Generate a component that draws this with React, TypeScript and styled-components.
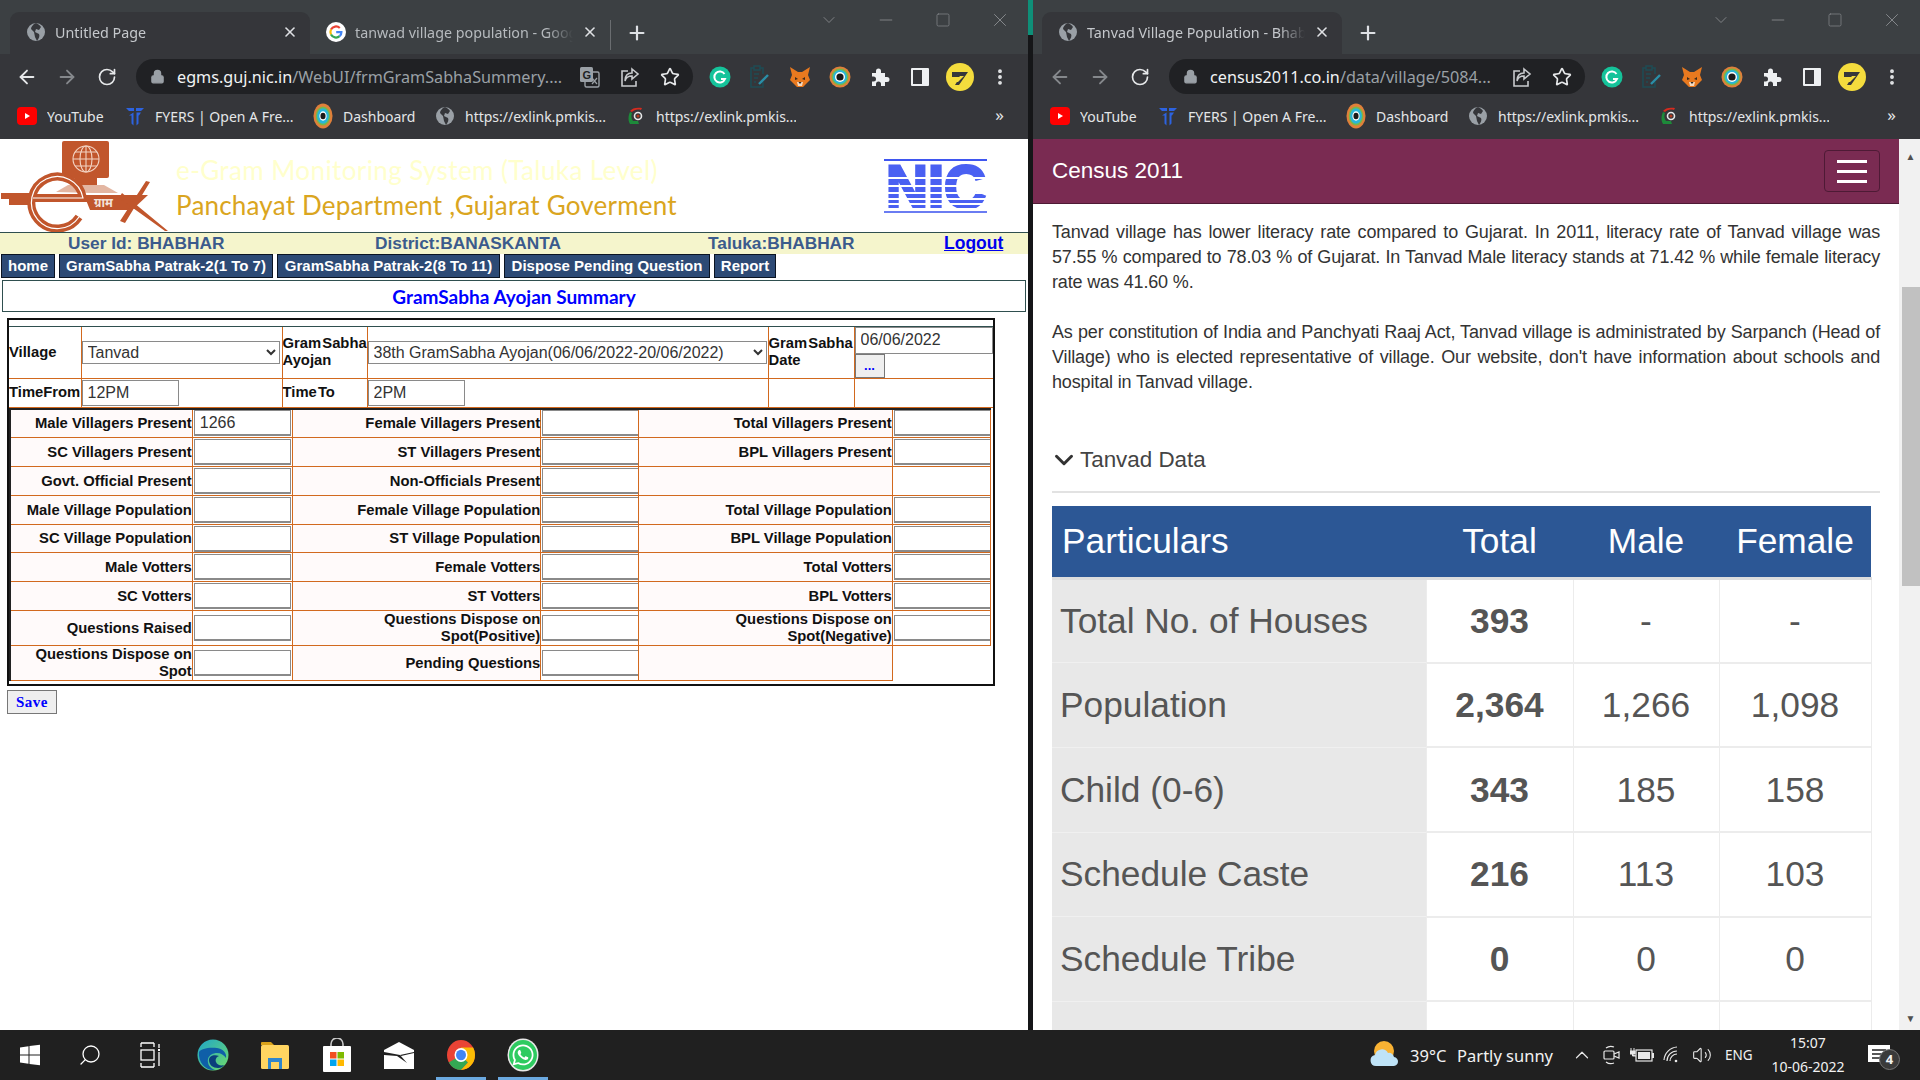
import React from "react";
import styled, { createGlobalStyle } from "styled-components";
import { ArrowLeft, ArrowRight, RotateCw, Lock, Star, Plus, X, Minus, Square, ChevronDown, ChevronUp, MoreVertical, Search, Volume2 } from "lucide-react";
import { FaWhatsapp } from "react-icons/fa";

const GlobalStyle = createGlobalStyle`
  html, body { margin: 0; padding: 0; background: #1b1c1e; }
  * { box-sizing: border-box; }
`;

const CHROME_FONT = `"Noto Sans", "Open Sans", sans-serif`;
const ARIAL = `"Liberation Sans", Arial, sans-serif`;
const COMIC = `"Comic Sans MS", "Lato", sans-serif`;

/* ---------- desktop ---------- */
const Screen = styled.div`
  width: 1920px;
  height: 1080px;
  display: grid;
  grid-template-rows: 1030px 50px;
  overflow: hidden;
`;
const Desktop = styled.div`
  display: flex;
  min-height: 0;
`;
const Divider = styled.div`
  width: 5px;
  background: linear-gradient(#0f8f78 0 35px, #151618 35px);
`;

/* ---------- browser chrome ---------- */
const Win = styled.div<{ $w: number }>`
  width: ${(p) => p.$w}px;
  display: flex;
  flex-direction: column;
  min-height: 0;
  background: #fff;
`;
const TabStrip = styled.div<{ $pad: number }>`
  height: 54px;
  flex: none;
  display: flex;
  background: #3c4043;
  padding-left: ${(p) => p.$pad}px;
  font: 14.3px ${CHROME_FONT};
`;
const Tab = styled.div<{ $active?: boolean }>`
  width: 300px;
  height: 42px;
  margin-top: 12px;
  display: flex;
  align-items: center;
  padding: 0 12px 2px 16px;
  gap: 9px;
  border-radius: 9px 9px 0 0;
  color: ${(p) => (p.$active ? "#c5c8cc" : "#b6babe")};
  background: ${(p) => (p.$active ? "#35363a" : "transparent")};
`;
const TabTitle = styled.span`
  flex: 1;
  white-space: nowrap;
  overflow: hidden;
  mask-image: linear-gradient(to right, #000 88%, transparent);
`;
const TabSep = styled.div`
  width: 1px;
  height: 30px;
  margin-top: 20px;
  background: #6a6d70;
`;
const NewTab = styled.div`
  width: 52px;
  height: 42px;
  margin-top: 12px;
  display: flex;
  align-items: center;
  justify-content: center;
  color: #dee1e5;
`;
const WinControls = styled.div`
  margin-left: auto;
  display: flex;
  height: 40px;
  color: #8b8e92;
`;
const WinControl = styled.div`
  width: 57px;
  display: flex;
  align-items: center;
  justify-content: center;
`;
const Toolbar = styled.div`
  height: 45px;
  flex: none;
  display: flex;
  align-items: center;
  padding-left: 7px;
  background: #35363a;
`;
const ToolBtn = styled.div<{ $dim?: boolean }>`
  width: 40px;
  height: 35px;
  flex: none;
  display: flex;
  align-items: center;
  justify-content: center;
  color: ${(p) => (p.$dim ? "#85888c" : "#e6e8ea")};
`;
const Pill = styled.div<{ $w: number }>`
  width: ${(p) => p.$w}px;
  height: 35px;
  margin-left: 9px;
  margin-right: 7px;
  flex: none;
  display: flex;
  align-items: center;
  border-radius: 18px;
  background: #202124;
  padding-left: 14px;
  padding-right: 3px;
  font: 16.2px ${CHROME_FONT};
  color: #9aa0a6;
`;
const UrlText = styled.div`
  flex: 1;
  margin-left: 12px;
  white-space: nowrap;
  overflow: hidden;
  b {
    font-weight: 400;
    color: #f1f3f4;
  }
`;
const Bookmarks = styled.div`
  height: 40px;
  flex: none;
  display: flex;
  align-items: flex-start;
  gap: 20px;
  padding: 6px 24px 0 17px;
  background: #35363a;
  border-bottom: 4px solid #35363a;
  font: 14px ${CHROME_FONT};
  color: #e4e6e8;
`;
const Bookmark = styled.div`
  display: flex;
  align-items: center;
  gap: 10px;
  height: 22px;
`;
const BookmarkLabel = styled.span<{ $w: number }>`
  width: ${(p) => p.$w}px;
  white-space: nowrap;
  overflow: hidden;
`;
const More = styled.span`
  margin-left: auto;
  font-size: 17px;
  line-height: 20px;
`;

/* ---------- small drawn icons ---------- */
const Globe = () => (
  <svg width="20" height="20" viewBox="0 0 20 20">
    <circle cx="10" cy="10" r="9" fill="#9aa0a6" />
    <path d="M10 1c-3 1-5 4-5 6l3 3 1 5 2 4c2-3 3-5 2-7l-4-2 1-3 3 1 2-3c-1-2-3-3-5-4z" fill="#35363a" />
  </svg>
);
const GoogleG = () => (
  <svg width="20" height="20" viewBox="0 0 20 20">
    <circle cx="10" cy="10" r="10" fill="#fff" />
    <path d="M5 7.5A5.6 5.6 0 0 1 13.8 6" fill="none" stroke="#ea4335" strokeWidth="2.2" />
    <path d="M5 7.5a5.6 5.6 0 0 0 0 5" fill="none" stroke="#fbbc05" strokeWidth="2.2" />
    <path d="M5 12.5a5.6 5.6 0 0 0 8.6 1.7" fill="none" stroke="#34a853" strokeWidth="2.2" />
    <path d="M13.6 14.2c1.2-1 1.8-2.4 1.8-4H10.2" fill="none" stroke="#4285f4" strokeWidth="2.2" />
  </svg>
);
const Translate = () => (
  <svg width="22" height="22" viewBox="0 0 22 22">
    <rect x="6" y="6" width="14" height="15" rx="1.5" fill="none" stroke="#9aa0a6" strokeWidth="1.4" />
    <rect x="1" y="1" width="13" height="15" rx="1.5" fill="#9aa0a6" />
    <text x="3.5" y="13" fontSize="11" fontWeight="700" fontFamily={ARIAL} fill="#202124">G</text>
    <path d="M13 12l5 6M18 12l-5 6" stroke="#9aa0a6" strokeWidth="1.2" />
  </svg>
);
const ShareIcon = () => (
  <svg width="22" height="22" viewBox="0 0 22 22" fill="none" stroke="#c8cacd" strokeWidth="1.6">
    <path d="M9 5H3v15h14v-5" />
    <path d="M13 3l6 5-6 5v-3c-4 0-6 1-7 5 0-5 2-8 7-8z" />
  </svg>
);
const Grammarly = () => (
  <svg width="22" height="22" viewBox="0 0 22 22">
    <circle cx="11" cy="11" r="10.5" fill="#15c39a" />
    <path d="M15.5 8a5.5 5.5 0 1 0 .5 5h-4" fill="none" stroke="#fff" strokeWidth="2" />
  </svg>
);
const Clipboard = () => (
  <svg width="22" height="24" viewBox="0 0 22 24" fill="none" stroke="#1f4c54" strokeWidth="1.6">
    <path d="M5 3H2v19h12v-5M11 3h3v6M5 1h6v4H5z" />
    <path d="M5 9h5M5 13h4M5 17h2" />
    <path d="M10 19l9-9" stroke="#2a8fa8" strokeWidth="2.4" />
  </svg>
);
const Fox = () => (
  <svg width="22" height="22" viewBox="0 0 22 22">
    <path d="M1 1l8 5h4l8-5-2 8 2 5-4 4-3 3H8l-3-3-4-4 2-5z" fill="#e8791f" />
    <path d="M6 11l3 2-3 1zM16 11l-3 2 3 1z" fill="#3b2a1d" />
    <path d="M8 16h6l-1 4H9z" fill="#f5d9bf" />
    <path d="M9.5 16h3l-1.5 2z" fill="#222" />
  </svg>
);
const EyeIcon = () => (
  <svg width="22" height="22" viewBox="0 0 22 22">
    <circle cx="11" cy="11" r="10.5" fill="#e0803a" />
    <circle cx="11" cy="11" r="8.5" fill="#7ab648" />
    <circle cx="11" cy="11" r="7" fill="#29b6d8" />
    <circle cx="11" cy="11" r="5" fill="#fff" />
    <circle cx="11" cy="11" r="3.6" fill="#1a1a1a" />
  </svg>
);
const PuzzleIcon = () => (
  <svg width="20" height="20" viewBox="0 0 20 20">
    <path d="M2 6h4V4a2.5 2.5 0 0 1 5 0v2h4v4h2a2.5 2.5 0 0 1 0 5h-2v4h-4v-2a2.5 2.5 0 0 0-5 0v2H2v-4.5h1.5a2.5 2.5 0 0 0 0-5H2z" fill="#eef0f2" />
  </svg>
);
const SidePanel = () => (
  <svg width="18" height="18" viewBox="0 0 18 18">
    <rect width="18" height="18" rx="1" fill="#eef0f2" />
    <rect x="2" y="2" width="9" height="14" fill="#35363a" />
  </svg>
);
const YellowBadge = () => (
  <svg width="28" height="28" viewBox="0 0 28 28">
    <circle cx="14" cy="14" r="14" fill="#f4dc3d" />
    <path d="M6 9h16l-9 13H9l5-8H6z" fill="#35363a" />
    <path d="M9 19l5-6h4l-6 6z" fill="#f4dc3d" />
  </svg>
);
const YouTubeMark = () => (
  <svg width="20" height="20" viewBox="0 0 20 20">
    <rect x="0" y="1" width="20" height="18" rx="4" fill="#f00" />
    <path d="M8 7l5 3-5 3z" fill="#fff" />
  </svg>
);
const Fyers = () => (
  <svg width="20" height="20" viewBox="0 0 20 20" fill="#2d63e0">
    <path d="M1 2h8v3H4zM11 2h8l-3 3h-5zM8.5 6.5v13l-2-2V9.5H4zM11.5 6.5H16l-2 3h-.5v8l-2 2z" />
  </svg>
);
const PmKisan = () => (
  <svg width="20" height="20" viewBox="0 0 20 20" fill="none">
    <path d="M4 5c2-3 7-4 12-3l-1 2c-4-1-7 0-9 2z" fill="#d62b1f" />
    <path d="M4 6c-2 4-2 9 0 12l9 0-1-3H7c-2-3-2-5-1-8z" fill="#1d8a3a" />
    <circle cx="12" cy="10" r="3.5" stroke="#e8e8e8" strokeWidth="1.6" />
    <circle cx="12" cy="10" r="1.5" fill="#b23a1e" />
  </svg>
);
const Dashboard = () => (
  <svg width="20" height="26" viewBox="0 0 22 22" preserveAspectRatio="none">
    <circle cx="11" cy="11" r="10.5" fill="#e0803a" />
    <circle cx="11" cy="11" r="8" fill="#7ab648" />
    <circle cx="11" cy="11" r="6.5" fill="#29b6d8" />
    <circle cx="11" cy="11" r="4" fill="#fff" />
    <circle cx="11" cy="11" r="2.8" fill="#1a1a1a" />
  </svg>
);

const bookmarks = [
  { icon: <YouTubeMark />, label: "YouTube", w: 58 },
  { icon: <Fyers />, label: "FYERS | Open A Fre...", w: 138 },
  { icon: <Dashboard />, label: "Dashboard", w: 72 },
  { icon: <Globe />, label: "https://exlink.pmkis...", w: 141 },
  { icon: <PmKisan />, label: "https://exlink.pmkis...", w: 140 },
];

interface BrowserProps {
  w: number;
  pad: number;
  tabs: { title: string; icon: React.ReactNode; active?: boolean }[];
  host: string;
  path: string;
  pill: number;
  translate?: boolean;
  backDim?: boolean;
  children: React.ReactNode;
}

const Browser = ({ w, pad, tabs, host, path, pill, translate, backDim, children }: BrowserProps) => (
  <Win $w={w}>
    <TabStrip $pad={pad}>
      {tabs.map((t) => (
        <Tab key={t.title} $active={t.active}>
          {t.icon}
          <TabTitle>{t.title}</TabTitle>
          <X size={16} color="#dfe1e4" strokeWidth={2.4} />
        </Tab>
      ))}
      {tabs.length > 1 && <TabSep />}
      <NewTab>
        <Plus size={22} strokeWidth={2.4} />
      </NewTab>
      <WinControls>
        <WinControl><ChevronDown size={20} strokeWidth={1} /></WinControl>
        <WinControl><Minus size={20} strokeWidth={1} /></WinControl>
        <WinControl><Square size={16} strokeWidth={1} /></WinControl>
        <WinControl><X size={22} strokeWidth={1} /></WinControl>
      </WinControls>
    </TabStrip>
    <Toolbar>
      <ToolBtn $dim={backDim}><ArrowLeft size={22} /></ToolBtn>
      <ToolBtn $dim><ArrowRight size={22} /></ToolBtn>
      <ToolBtn><RotateCw size={20} /></ToolBtn>
      <Pill $w={pill}>
        <Lock size={15} fill="#9aa0a6" color="#9aa0a6" />
        <UrlText><b>{host}</b>{path}</UrlText>
        {translate && <ToolBtn><Translate /></ToolBtn>}
        <ToolBtn><ShareIcon /></ToolBtn>
        <ToolBtn><Star size={20} /></ToolBtn>
      </Pill>
      <ToolBtn><Grammarly /></ToolBtn>
      <ToolBtn><Clipboard /></ToolBtn>
      <ToolBtn><Fox /></ToolBtn>
      <ToolBtn><EyeIcon /></ToolBtn>
      <ToolBtn><PuzzleIcon /></ToolBtn>
      <ToolBtn><SidePanel /></ToolBtn>
      <ToolBtn><YellowBadge /></ToolBtn>
      <ToolBtn><MoreVertical size={20} strokeWidth={2.6} /></ToolBtn>
    </Toolbar>
    <Bookmarks>
      {bookmarks.map((b, i) => (
        <Bookmark key={i}>
          {b.icon}
          <BookmarkLabel $w={b.w}>{b.label}</BookmarkLabel>
        </Bookmark>
      ))}
      <More>»</More>
    </Bookmarks>
    {children}
  </Win>
);

/* ---------- left page: e-gram form ---------- */
const LeftPage = styled.div`
  flex: 1;
  min-height: 0;
  overflow: hidden;
  background: #fff;
`;
const SiteHeader = styled.header`
  height: 93px;
  display: flex;
`;
const SiteTitles = styled.div`
  margin-left: 6px;
  padding-top: 14px;
  font: 26px/35px ${COMIC};
  white-space: nowrap;
`;
const SystemName = styled.div`
  color: #ffffcc;
  letter-spacing: 0.4px;
`;
const DeptName = styled.div`
  color: #daa520;
  letter-spacing: 0.2px;
`;
const NicWrap = styled.div`
  margin-left: auto;
  margin-right: 41px;
  padding-top: 20px;
`;
const InfoBar = styled.div`
  height: 22px;
  display: flex;
  align-items: center;
  padding-left: 68px;
  background: #f5f5cc;
  border-top: 1px solid #2f4f4f;
  font: bold 17.3px ${ARIAL};
  color: #3b5b8c;
  white-space: nowrap;
`;
const InfoItem = styled.span<{ $w: number }>`
  width: ${(p) => p.$w}px;
`;
const Logout = styled.a`
  color: #0000ee;
  text-decoration: underline;
  font-size: 17.5px;
`;
const NavRow = styled.nav`
  height: 24px;
  display: flex;
  gap: 4px;
  padding-left: 1px;
`;
const NavItem = styled.div<{ $w: number }>`
  width: ${(p) => p.$w}px;
  display: flex;
  align-items: center;
  justify-content: center;
  padding-bottom: 2px;
  background: #2d4a75;
  border: 1px solid #0b1422;
  color: #fff;
  font: bold 15px ${ARIAL};
  white-space: nowrap;
`;
const TitleBox = styled.div`
  height: 32px;
  margin: 2px 2px 0;
  border: 1px solid #2f4f4f;
  display: flex;
  align-items: center;
  justify-content: center;
  font: bold 19px ${COMIC};
  color: #0000ff;
`;
const FormFrame = styled.table`
  width: 988px;
  margin: 6px 0 0 7px;
  table-layout: fixed;
  border-collapse: collapse;
  border: 2px solid #111;
  font: bold 14.8px/17px ${ARIAL};
  color: #111;
`;
const ThinRow = styled.tr`
  height: 7px;
  td {
    padding: 0;
    border-bottom: 1px solid #2f4f4f;
  }
`;
const HeadCell = styled.td`
  padding: 0;
  border: 1px solid #d2691e;
  vertical-align: middle;
`;
const HeadRow = styled.tr<{ $h: number }>`
  height: ${(p) => p.$h}px;
`;
const InnerWrap = styled.td`
  padding: 0;
`;
const InnerTable = styled.table`
  width: 982px;
  table-layout: fixed;
  border-collapse: collapse;
  border-top: 2px solid #222;
  border-left: 2px solid #222;
  margin-bottom: 3px;
`;
const InnerRow = styled.tr<{ $h: number }>`
  height: ${(p) => p.$h}px;
`;
const Label = styled.td`
  padding: 0;
  text-align: right;
  background: #fffafa;
  border: 1px solid #d2691e;
`;
const FieldCell = styled.td<{ $open?: boolean }>`
  padding: 0 1px;
  border: ${(p) => (p.$open ? "none" : "1px solid #d2691e")};
`;
const Field = styled.input`
  display: block;
  width: 97px;
  height: 26px;
  border: 1px solid #8a8a8a;
  border-bottom-width: 2px;
  padding: 0 5px;
  font: 16px ${ARIAL};
  color: #333;
  background: #fff;
`;
const TimeField = styled(Field)`
  border-bottom-width: 1px;
`;
const Picker = styled.select<{ $w: number }>`
  display: block;
  width: ${(p) => p.$w}px;
  height: 23px;
  border: 1px solid #8a8a8a;
  border-radius: 0;
  padding: 0 0 0 1px;
  font: 16px ${ARIAL};
  color: #333;
  background: #fff;
`;
const DateField = styled(TimeField)`
  width: 138px;
  height: 27px;
`;
const DotsBtn = styled.button`
  display: block;
  width: 30px;
  height: 24px;
  padding: 0;
  background: #efefef;
  border: 1px solid #777;
  font: bold 13px ${ARIAL};
  color: #0000ff;
`;
const SaveBtn = styled.button`
  display: block;
  width: 50px;
  height: 24px;
  margin: 4px 0 0 7px;
  padding: 0;
  background: #efefef;
  border: 1px solid #777;
  font: bold 15px "Liberation Serif", serif;
  letter-spacing: 0.5px;
  color: #0000ff;
`;
const JoinWords = styled.span`
  word-spacing: -3px;
  white-space: nowrap;
`;

const rows: { h: number; cells: string[]; value?: string }[] = [
  { h: 29, value: "1266", cells: ["Male Villagers Present", "Female Villagers Present", "Total Villagers Present"] },
  { h: 29, cells: ["SC Villagers Present", "ST Villagers Present", "BPL Villagers Present"] },
  { h: 29, cells: ["Govt. Official Present", "Non-Officials Present", ""] },
  { h: 29, cells: ["Male Village Population", "Female Village Population", "Total Village Population"] },
  { h: 28, cells: ["SC Village Population", "ST Village Population", "BPL Village Population"] },
  { h: 29, cells: ["Male Votters", "Female Votters", "Total Votters"] },
  { h: 29, cells: ["SC Votters", "ST Votters", "BPL Votters"] },
  { h: 35, cells: ["Questions Raised", "Questions Dispose on Spot(Positive)", "Questions Dispose on Spot(Negative)"] },
  { h: 35, cells: ["Questions Dispose on Spot", "Pending Questions", ""] },
];

const GramForm = () => (
  <LeftPage>
    <SiteHeader>
      <svg width="170" height="93" viewBox="0 0 170 93">
        <rect x="62" y="2" width="47" height="37" rx="2" fill="#c1562c" />
        <g fill="none" stroke="#f3d4c4" strokeWidth="1.1">
          <circle cx="86" cy="20" r="13" />
          <ellipse cx="86" cy="20" rx="6" ry="13" />
          <path d="M86 7v26M73 20h26M75 13h22M75 27h22" />
        </g>
        <rect x="75" y="39" width="22" height="7" fill="#c1562c" />
        <path d="M56 53l12-7h36l14 8H92z" fill="#e3b6a2" />
        <path d="M1 54h34v6h-3v6H9v-6H1z" fill="#c1562c" />
        <path d="M33 59h50A26 26 0 1 0 79 78" fill="none" stroke="#c1562c" strokeWidth="8" />
        <path d="M33 59h50A26 26 0 1 0 79 78" fill="none" stroke="#fff" strokeWidth="1.2" />
        <path d="M84 56h64l-16 15H90z" fill="#c1562c" />
        <text x="94" y="68" fontSize="12" fontWeight="700" fontFamily="'Noto Sans', sans-serif" fill="#f3e3da">ग्राम</text>
        <path d="M150 43l-4-1-26 40 5 2zM122 54l-3 5 46 33h3z" fill="#c1562c" />
      </svg>
      <SiteTitles>
        <SystemName>e-Gram Monitoring System (Taluka Level)</SystemName>
        <DeptName>Panchayat Department ,Gujarat Goverment</DeptName>
      </SiteTitles>
      <NicWrap>
        <svg width="103" height="54" viewBox="0 0 103 54">
          <rect width="103" height="2" fill="#3f56f0" />
          <rect y="52" width="103" height="2" fill="#6a7cf2" />
          <text x="2" y="49" fontSize="62" fontWeight="700" fontFamily={ARIAL} fill="#4a60f2" stroke="#4a60f2" strokeWidth="3" textLength="100" lengthAdjust="spacingAndGlyphs">NIC</text>
          {[18, 26, 33, 39, 44].map((y) => (
            <rect key={y} y={y} width="103" height="2" fill="#fff" />
          ))}
          <rect y="49" width="103" height="3" fill="#fff" />
        </svg>
      </NicWrap>
    </SiteHeader>
    <InfoBar>
      <InfoItem $w={307}>User Id: BHABHAR</InfoItem>
      <InfoItem $w={333}>District:BANASKANTA</InfoItem>
      <InfoItem $w={236}>Taluka:BHABHAR</InfoItem>
      <Logout>Logout</Logout>
    </InfoBar>
    <NavRow>
      <NavItem $w={54}>home</NavItem>
      <NavItem $w={214}>GramSabha Patrak-2(1 To 7)</NavItem>
      <NavItem $w={223}>GramSabha Patrak-2(8 To 11)</NavItem>
      <NavItem $w={206}>Dispose Pending Question</NavItem>
      <NavItem $w={62}>Report</NavItem>
    </NavRow>
    <TitleBox>GramSabha Ayojan Summary</TitleBox>
    <FormFrame>
      <colgroup>
        <col width="73" />
        <col width="201" />
        <col width="85" />
        <col width="401" />
        <col width="86" />
        <col width="140" />
      </colgroup>
      <tbody>
        <ThinRow><td colSpan={6} /></ThinRow>
        <HeadRow $h={52}>
          <HeadCell>Village</HeadCell>
          <HeadCell>
            <Picker $w={198} defaultValue="Tanvad"><option>Tanvad</option></Picker>
          </HeadCell>
          <HeadCell><JoinWords>Gram Sabha</JoinWords><br />Ayojan</HeadCell>
          <HeadCell>
            <Picker $w={399} defaultValue="38"><option value="38">38th GramSabha Ayojan(06/06/2022-20/06/2022)</option></Picker>
          </HeadCell>
          <HeadCell><JoinWords>Gram Sabha</JoinWords><br />Date</HeadCell>
          <HeadCell>
            <DateField defaultValue="06/06/2022" />
            <DotsBtn>...</DotsBtn>
          </HeadCell>
        </HeadRow>
        <HeadRow $h={29}>
          <HeadCell>TimeFrom</HeadCell>
          <HeadCell><TimeField defaultValue="12PM" /></HeadCell>
          <HeadCell><JoinWords>Time To</JoinWords></HeadCell>
          <HeadCell><TimeField defaultValue="2PM" /></HeadCell>
          <HeadCell />
          <HeadCell />
        </HeadRow>
        <tr>
          <InnerWrap colSpan={6}>
            <InnerTable>
              <colgroup>
                <col width="182" />
                <col width="100" />
                <col width="248" />
                <col width="98" />
                <col width="253" />
                <col width="98" />
              </colgroup>
              <tbody>
                {rows.map((r, i) => (
                  <InnerRow key={i} $h={r.h}>
                    <Label>{r.cells[0]}</Label>
                    <FieldCell><Field defaultValue={r.value} /></FieldCell>
                    <Label>{r.cells[1]}</Label>
                    <FieldCell><Field /></FieldCell>
                    <Label>{r.cells[2]}</Label>
                    <FieldCell $open={i === 8}>{r.cells[2] !== "" && <Field />}</FieldCell>
                  </InnerRow>
                ))}
              </tbody>
            </InnerTable>
          </InnerWrap>
        </tr>
      </tbody>
    </FormFrame>
    <SaveBtn>Save</SaveBtn>
  </LeftPage>
);

/* ---------- right page: census ---------- */
const RightBody = styled.div`
  flex: 1;
  min-height: 0;
  display: flex;
  overflow: hidden;
`;
const RightPage = styled.div`
  flex: 1;
  min-width: 0;
  overflow: hidden;
  font-family: ${ARIAL};
`;
const Navbar = styled.div`
  height: 65px;
  display: flex;
  align-items: center;
  justify-content: space-between;
  padding: 0 19px;
  background: #7a2b52;
  border-bottom: 1px solid #4e1a35;
  color: #fff;
  font-size: 22.5px;
`;
const Toggler = styled.div`
  width: 56px;
  height: 42px;
  display: flex;
  flex-direction: column;
  justify-content: center;
  gap: 7px;
  align-items: center;
  border: 1px solid #4e1a35;
  border-radius: 4px;
  span {
    width: 30px;
    height: 3px;
    background: #fff;
  }
`;
const Content = styled.div`
  padding: 16px 19px 0;
`;
const Paragraph = styled.p`
  width: 828px;
  margin: 0;
  font-size: 18px;
  line-height: 25px;
  letter-spacing: -0.15px;
  color: #333;
  text-align: justify;
`;
const Spacer = styled.div`
  height: 25px;
`;
const SectionHead = styled.div`
  width: 828px;
  margin-top: 47px;
  padding-bottom: 13px;
  height: 51px;
  display: flex;
  align-items: center;
  gap: 1px;
  font-size: 22.4px;
  color: #444;
  border-bottom: 2px solid #e2e2e2;
`;
const SectionChevron = styled(ChevronDown)`
  margin-left: -3px;
  flex: none;
`;
const CensusTable = styled.table`
  width: 819px;
  margin-top: 13px;
  table-layout: fixed;
  border-collapse: collapse;
  font-size: 35.3px;
  color: #555;
`;
const HeadTh = styled.th<{ $left?: boolean }>`
  height: 72px;
  padding: 0 ${(p) => (p.$left ? "10px" : "0")};
  text-align: ${(p) => (p.$left ? "left" : "center")};
  font-weight: 400;
  background: #2c5795;
  color: #fff;
  border-bottom: 3px solid #ddd;
`;
const DataRow = styled.tr`
  height: 84.7px;
`;
const NameCell = styled.td`
  padding: 0 8px;
  background: #e8e8e8;
  border-bottom: 1.5px solid #f0f0f0;
`;
const ValCell = styled.td<{ $bold?: boolean }>`
  text-align: center;
  font-weight: ${(p) => (p.$bold ? 700 : 400)};
  border: 1px solid #ececec;
  border-bottom-width: 2px;
`;
const ScrollTrack = styled.div`
  width: 21px;
  flex: none;
  display: flex;
  flex-direction: column;
  align-items: flex-end;
  background: #f1f1f1;
`;
const ScrollArrow = styled.div<{ $down?: boolean }>`
  width: 19px;
  height: 17px;
  flex: none;
  margin-top: ${(p) => (p.$down ? "auto" : "9px")};
  margin-bottom: ${(p) => (p.$down ? "3px" : "0")};
  color: #505050;
  font-size: 10px;
  line-height: 17px;
  text-align: center;
`;
const ScrollThumb = styled.div`
  width: 18px;
  height: 299px;
  margin-top: 122px;
  background: #c1c1c1;
`;

const census = [
  ["Total No. of Houses", "393", "-", "-"],
  ["Population", "2,364", "1,266", "1,098"],
  ["Child (0-6)", "343", "185", "158"],
  ["Schedule Caste", "216", "113", "103"],
  ["Schedule Tribe", "0", "0", "0"],
  ["\u00a0", "", "", ""],
];

const CensusPage = () => (
  <RightBody>
    <RightPage>
      <Navbar>
        Census 2011
        <Toggler><span /><span /><span /></Toggler>
      </Navbar>
      <Content>
        <Paragraph>
          Tanvad village has lower literacy rate compared to Gujarat. In 2011, literacy rate of Tanvad village was 57.55 % compared to 78.03 % of Gujarat. In Tanvad Male literacy stands at 71.42 % while female literacy rate was 41.60 %.
        </Paragraph>
        <Spacer />
        <Paragraph>
          As per constitution of India and Panchyati Raaj Act, Tanvad village is administrated by Sarpanch (Head of Village) who is elected representative of village. Our website, don't have information about schools and hospital in Tanvad village.
        </Paragraph>
        <SectionHead>
          <SectionChevron size={30} strokeWidth={2.4} color="#333" />
          Tanvad Data
        </SectionHead>
        <CensusTable>
          <colgroup>
            <col width="374" />
            <col width="147" />
            <col width="146" />
            <col width="152" />
          </colgroup>
          <thead>
            <tr>
              <HeadTh $left>Particulars</HeadTh>
              <HeadTh>Total</HeadTh>
              <HeadTh>Male</HeadTh>
              <HeadTh>Female</HeadTh>
            </tr>
          </thead>
          <tbody>
            {census.map((r) => (
              <DataRow key={r[0]}>
                <NameCell>{r[0]}</NameCell>
                <ValCell $bold>{r[1]}</ValCell>
                <ValCell>{r[2]}</ValCell>
                <ValCell>{r[3]}</ValCell>
              </DataRow>
            ))}
          </tbody>
        </CensusTable>
      </Content>
    </RightPage>
    <ScrollTrack>
      <ScrollArrow>▲</ScrollArrow>
      <ScrollThumb />
      <ScrollArrow $down>▼</ScrollArrow>
    </ScrollTrack>
  </RightBody>
);

/* ---------- taskbar ---------- */
const Taskbar = styled.footer`
  display: flex;
  align-items: center;
  background: #202020;
  color: #f2f2f2;
  font-family: ${CHROME_FONT};
`;
const TaskBtn = styled.div<{ $w: number }>`
  width: ${(p) => p.$w}px;
  height: 50px;
  flex: none;
  display: flex;
  align-items: center;
  justify-content: center;
`;
const OpenTaskBtn = styled(TaskBtn)`
  margin: 0 6px;
  padding-top: 3px;
  border-bottom: 3px solid #6ba9e0;
`;
const Tray = styled.div`
  margin-left: auto;
  display: flex;
  align-items: center;
  height: 50px;
  padding-right: 15px;
`;
const WeatherText = styled.div`
  width: 143px;
  margin: 0 14px 0 11px;
  display: flex;
  justify-content: space-between;
  font-size: 16.5px;
  white-space: nowrap;
`;
const TrayIcon = styled.div`
  width: 30px;
  display: flex;
  justify-content: center;
  color: #e8e8e8;
`;
const Lang = styled.div`
  width: 29px;
  margin: 0 9px 0 8px;
  font-size: 13.5px;
`;
const Clock = styled.div`
  width: 90px;
  text-align: center;
  font-size: 14px;
  line-height: 24px;
`;
const Notify = styled.div`
  width: 52px;
  height: 40px;
  position: relative;
  display: flex;
  justify-content: center;
  align-items: center;
`;
const NotifyBadge = styled.span`
  position: absolute;
  left: 26px;
  top: 14px;
  width: 21px;
  height: 21px;
  border-radius: 50%;
  border: 1.5px solid #777;
  background: #3a3a3a;
  font: bold 13px/18px ${CHROME_FONT};
  text-align: center;
`;
const MirrorSearch = styled(Search)`
  transform: scaleX(-1);
`;

const WinLogo = () => (
  <svg width="22" height="22" viewBox="0 0 22 22" fill="#fff">
    <path d="M1 3.5l8.5-1.2V10.5H1zM10.5 2.1L21 .7V10.5H10.5zM1 11.5h8.5v8.2L1 18.5zM10.5 11.5H21v9.8L10.5 19.9z" />
  </svg>
);
const TaskView = () => (
  <svg width="22" height="26" viewBox="0 0 22 26" fill="none" stroke="#fff" strokeWidth="1.3">
    <path d="M1 1h13M1 25h13M1 1v4M14 1v4M1 25v-4M14 25v-4" />
    <rect x="1" y="8" width="13" height="10" />
    <path d="M19 2v4M19 10v14" />
    <rect x="18" y="7" width="2" height="2" fill="#fff" stroke="none" />
  </svg>
);
const Edge = () => (
  <svg width="32" height="32" viewBox="0 0 32 32">
    <defs>
      <linearGradient id="edgeTop" x1="0" y1="0" x2="1" y2="1">
        <stop offset="0" stopColor="#1fa6c9" />
        <stop offset="1" stopColor="#6fdc6a" />
      </linearGradient>
    </defs>
    <circle cx="16" cy="16" r="15.5" fill="url(#edgeTop)" />
    <path d="M2 13C1 24 9 32 18 31c-5-2-8-6-7-11 1-4 5-6 9-6 4 0 7 2 9 5 1-5-3-9-9-10C11 8 4 10 2 13z" fill="#0f5fa8" />
    <path d="M12 21c0 5 4 8 9 8 3 0 5-1 6-3-3 1-7 0-8-3-1-2 0-5 3-6-5-2-10 0-10 4z" fill="#0b3f7c" />
  </svg>
);
const FolderIcon = () => (
  <svg width="30" height="30" viewBox="0 0 30 30">
    <path d="M1 3a1 1 0 0 1 1-1h9l3 3H1z" fill="#d9a21b" />
    <rect x="1" y="5" width="28" height="24" rx="1.5" fill="#ffd561" />
    <path d="M8 29V18h14v11h-3v-7h-8v7z" fill="#2f86cc" />
  </svg>
);
const StoreIcon = () => (
  <svg width="30" height="34" viewBox="0 0 30 34">
    <path d="M9 9V6a6 6 0 0 1 12 0v3" fill="none" stroke="#c9c9c9" strokeWidth="1.6" />
    <rect x="1" y="8" width="28" height="26" rx="1" fill="#fff" />
    <rect x="8" y="14" width="6.5" height="6.5" fill="#f25022" />
    <rect x="15.5" y="14" width="6.5" height="6.5" fill="#7fba00" />
    <rect x="8" y="21.5" width="6.5" height="6.5" fill="#00a4ef" />
    <rect x="15.5" y="21.5" width="6.5" height="6.5" fill="#ffb900" />
  </svg>
);
const MailIcon = () => (
  <svg width="32" height="28" viewBox="0 0 32 28">
    <path d="M1 9L16 1l15 8v19H1z" fill="#fff" />
    <path d="M1 11l16 3 7 8-10-7-13-1z" fill="#202020" />
    <path d="M17 14l14-3v1l-13 3z" fill="#202020" />
  </svg>
);
const ChromeIcon = () => (
  <svg width="30" height="32" viewBox="0 0 30 30" preserveAspectRatio="none">
    <circle cx="15" cy="15" r="14" fill="#ea4335" />
    <path d="M15 15L2.9 22A14 14 0 0 0 15 29l7-7z" fill="#34a853" />
    <path d="M15 15l7 7-7 7A14 14 0 0 0 29 15c0-2.5-.7-4.9-1.900-7H15z" fill="#fbbc05" />
    <circle cx="15" cy="15" r="6.5" fill="#fff" />
    <circle cx="15" cy="15" r="5" fill="#4285f4" />
  </svg>
);
const WhatsappBubble = styled.span`
  width: 28px;
  height: 30px;
  border-radius: 50%;
  display: flex;
  align-items: center;
  justify-content: center;
  background: #2ecb60;
  box-shadow: 0 0 0 1.5px #e9e9e9;
  color: #fff;
`;
const Weather = () => (
  <svg width="30" height="30" viewBox="0 0 30 30">
    <circle cx="15" cy="11" r="10" fill="#f9b233" />
    <path d="M7 26a5.5 5.5 0 0 1-1-10.9A7 7 0 0 1 19 13a5 5 0 0 1 6 4 4.5 4.5 0 0 1-1 9z" fill="#bfe3f7" />
  </svg>
);
const CameraInUse = () => (
  <svg width="18" height="22" viewBox="0 0 18 22" fill="none" stroke="#e8e8e8" strokeWidth="1.2">
    <path d="M3 4A8 8 0 0 1 11 3M3 18a8 8 0 0 0 8 1" />
    <rect x="1" y="7" width="10" height="8" rx="1" />
    <path d="M11 10l5-2v6l-5-2" />
  </svg>
);
const PluggedBattery = () => (
  <svg width="24" height="16" viewBox="0 0 24 16">
    <path d="M1 1v3M4 1v3M0 4h5v3H0zM2.5 7v2H6" fill="#e8e8e8" stroke="#e8e8e8" strokeWidth="1" />
    <rect x="6" y="3" width="16" height="11" fill="none" stroke="#e8e8e8" strokeWidth="1.2" />
    <rect x="8" y="5" width="12" height="7" fill="#e8e8e8" />
    <rect x="22" y="6" width="2" height="5" fill="#e8e8e8" />
  </svg>
);
const WifiIcon = () => (
  <svg width="18" height="18" viewBox="0 0 18 18" fill="none" stroke="#e8e8e8" strokeWidth="1.2">
    <path d="M1 14A14 14 0 0 1 14 1M4 15a10 10 0 0 1 10-10M7 15a7 7 0 0 1 7-7" />
    <circle cx="13" cy="15" r="1.3" fill="#e8e8e8" stroke="none" />
  </svg>
);
const Message = () => (
  <svg width="24" height="22" viewBox="0 0 24 22">
    <path d="M1 1h22v17H1z" fill="#fff" />
    <path d="M5 6h14M5 10h14M5 14h9" stroke="#202020" strokeWidth="1.3" />
  </svg>
);

export default function App() {
  return (
    <>
      <GlobalStyle />
      <Screen>
        <Desktop>
          <Browser
            w={1028}
            pad={10}
            pill={557}
            translate
            host="egms.guj.nic.in"
            path="/WebUI/frmGramSabhaSummery...."
            tabs={[
              { title: "Untitled Page", icon: <Globe />, active: true },
              { title: "tanwad village population - Goog", icon: <GoogleG /> },
            ]}
          >
            <GramForm />
          </Browser>
          <Divider />
          <Browser
            w={887}
            pad={9}
            pill={416}
            backDim
            host="census2011.co.in"
            path="/data/village/5084..."
            tabs={[{ title: "Tanvad Village Population - Bhab", icon: <Globe />, active: true }]}
          >
            <CensusPage />
          </Browser>
        </Desktop>
        <Taskbar>
          <TaskBtn $w={60}><WinLogo /></TaskBtn>
          <TaskBtn $w={60}><MirrorSearch size={24} color="#fff" strokeWidth={1.3} /></TaskBtn>
          <TaskBtn $w={62}><TaskView /></TaskBtn>
          <TaskBtn $w={62}><Edge /></TaskBtn>
          <TaskBtn $w={62}><FolderIcon /></TaskBtn>
          <TaskBtn $w={62}><StoreIcon /></TaskBtn>
          <TaskBtn $w={62}><MailIcon /></TaskBtn>
          <OpenTaskBtn $w={50}><ChromeIcon /></OpenTaskBtn>
          <OpenTaskBtn $w={50}><WhatsappBubble><FaWhatsapp size={24} /></WhatsappBubble></OpenTaskBtn>
          <Tray>
            <Weather />
            <WeatherText><span>39°C</span><span>Partly sunny</span></WeatherText>
            <TrayIcon><ChevronUp size={22} strokeWidth={1.3} /></TrayIcon>
            <TrayIcon><CameraInUse /></TrayIcon>
            <TrayIcon><PluggedBattery /></TrayIcon>
            <TrayIcon><WifiIcon /></TrayIcon>
            <TrayIcon><Volume2 size={20} strokeWidth={1.3} /></TrayIcon>
            <Lang>ENG</Lang>
            <Clock>15:07<br />10-06-2022</Clock>
            <Notify>
              <Message />
              <NotifyBadge>4</NotifyBadge>
            </Notify>
          </Tray>
        </Taskbar>
      </Screen>
    </>
  );
}
